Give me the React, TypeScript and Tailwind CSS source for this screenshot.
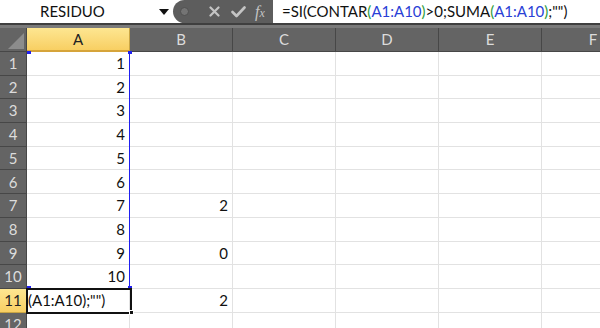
import React from "react";

const cols = ["A", "B", "C", "D", "E", "F"];
const rowsData: { a: string; b: string }[] = [
  { a: "1", b: "" },
  { a: "2", b: "" },
  { a: "3", b: "" },
  { a: "4", b: "" },
  { a: "5", b: "" },
  { a: "6", b: "" },
  { a: "7", b: "2" },
  { a: "8", b: "" },
  { a: "9", b: "0" },
  { a: "10", b: "" },
  { a: "", b: "2" },
  { a: "", b: "" },
];

const font = { fontFamily: "Lato, 'Open Sans', 'Liberation Sans', sans-serif" };

export default function App() {
  return (
    <div className="relative w-[600px] h-[328px] overflow-hidden bg-white" style={font}>
      {/* formula bar */}
      <div className="flex h-[23px] items-stretch bg-white">
        <div className="relative flex w-[173px] items-center">
          <span className="pl-[40px] text-[15px] text-[#111]">RESIDUO</span>
          <svg className="absolute left-[159px] top-[9px]" width="10" height="6" viewBox="0 0 10 6">
            <path d="M0 0 L10 0 L5 6 Z" fill="#111" />
          </svg>
        </div>
        <div className="relative flex w-[100px] items-center rounded-l-[12px] bg-[#5d5d5d]">
          <div className="ml-[7px] h-[9px] w-[9px] rounded-full border border-[#505050] bg-[#747474]" />
          <svg className="ml-[20px]" width="11" height="11" viewBox="0 0 11 11">
            <path d="M1.5 1.5 L9.5 9.5 M9.5 1.5 L1.5 9.5" stroke="#c4c4c4" strokeWidth="2.2" strokeLinecap="round" />
          </svg>
          <svg className="ml-[11px]" width="15" height="12" viewBox="0 0 15 12">
            <path d="M1.5 6 L5.5 10 L13.5 1.5" stroke="#c4c4c4" strokeWidth="2.6" fill="none" strokeLinecap="round" strokeLinejoin="round" />
          </svg>
          <span
            className="ml-[9px] text-[16px] italic leading-none text-[#c4c4c4]"
            style={{ fontFamily: "'Liberation Serif', 'DejaVu Serif', serif" }}
          >
            f<span className="text-[12px]">x</span>
          </span>
        </div>
        <div className="flex flex-1 items-center pl-[9px] text-[15px] text-[#111] whitespace-nowrap">
          =SI(CONTAR<span className="text-[#2d9c3a]">(</span>
          <span className="text-[#2a3fd6]">A1:A10</span>
          <span className="text-[#2d9c3a]">)</span>&gt;0;SUMA<span className="text-[#2d9c3a]">(</span>
          <span className="text-[#2a3fd6]">A1:A10</span>
          <span className="text-[#2d9c3a]">)</span>;"")
        </div>
      </div>
      {/* separator */}
      <div className="h-[5px] border-t-2 border-[#3f3f3f] bg-[#7a7a7a]" />

      {/* header row */}
      <div className="flex h-[24px]">
        <div className="relative w-[27px] shrink-0 border-r border-b border-[#474747] bg-[#646464]">
          <svg className="absolute right-[2px] bottom-[2px]" width="16" height="16" viewBox="0 0 16 16">
            <path d="M16 0 L16 16 L0 16 Z" fill="#8c8c8c" />
          </svg>
        </div>
        {cols.map((c) => (
          <div
            key={c}
            className={
              c === "A"
                ? "flex w-[103px] shrink-0 items-center justify-center border-r border-b-2 border-r-[#c9a544] border-b-[#d6a43a] bg-gradient-to-b from-[#fde691] to-[#f8cf62] text-[15px] text-[#222]"
                : "flex w-[103px] shrink-0 items-center justify-center border-r border-b border-[#474747] bg-[#646464] text-[15px] text-[#dcdcdc]"
            }
          >
            {c}
          </div>
        ))}
      </div>

      {/* data rows */}
      {rowsData.map((r, i) => {
        const n = i + 1;
        const sel = n === 11;
        return (
          <div key={n} className="flex h-[23.7px]">
            <div
              className={
                sel
                  ? "flex w-[27px] shrink-0 items-center justify-center border-r border-b border-[#c9a544] bg-gradient-to-b from-[#fde691] to-[#f8cf62] text-[15px] text-[#222]"
                  : "flex w-[27px] shrink-0 items-center justify-center border-r border-b border-[#474747] bg-[#646464] text-[15px] text-[#dcdcdc]"
              }
            >
              {n}
            </div>
            {cols.map((c) =>
              c === "A" && sel ? (
                <div
                  key={c}
                  className="flex w-[103px] shrink-0 items-center justify-start overflow-hidden border-r border-b border-[#e2e2e2] pl-[1px] text-[15px] text-[#111] whitespace-nowrap"
                >
                  (A1:A10);"")
                </div>
              ) : (
                <div
                  key={c}
                  className="flex w-[103px] shrink-0 items-center justify-end overflow-hidden border-r border-b border-[#e2e2e2] pr-[4px] text-[15px] text-[#111] whitespace-nowrap"
                >
                  {c === "A" ? r.a : c === "B" ? r.b : ""}
                </div>
              )
            )}
          </div>
        );
      })}

      {/* blue reference range overlay */}
      <div className="pointer-events-none absolute left-[27px] top-[52px] h-[236px] w-[103px] border-r-[1.5px] border-[#1f1ff0]" />
      <div className="absolute left-[27px] top-[51px] h-[3px] w-[4px] bg-[#1f1ff0]" />
      <div className="absolute left-[128px] top-[51px] h-[3px] w-[4px] bg-[#1f1ff0]" />
      <div className="absolute left-[27px] top-[286px] h-[3px] w-[4px] bg-[#1f1ff0]" />
      <div className="absolute left-[128px] top-[286px] h-[3px] w-[4px] bg-[#1f1ff0]" />

      {/* active cell A11 */}
      <div className="pointer-events-none absolute left-[26px] top-[288px] h-[26px] w-[106px] border-2 border-[#111]" />
      <div className="absolute left-[129px] top-[310px] h-[5px] w-[5px] border border-white bg-[#111]" />
    </div>
  );
}
